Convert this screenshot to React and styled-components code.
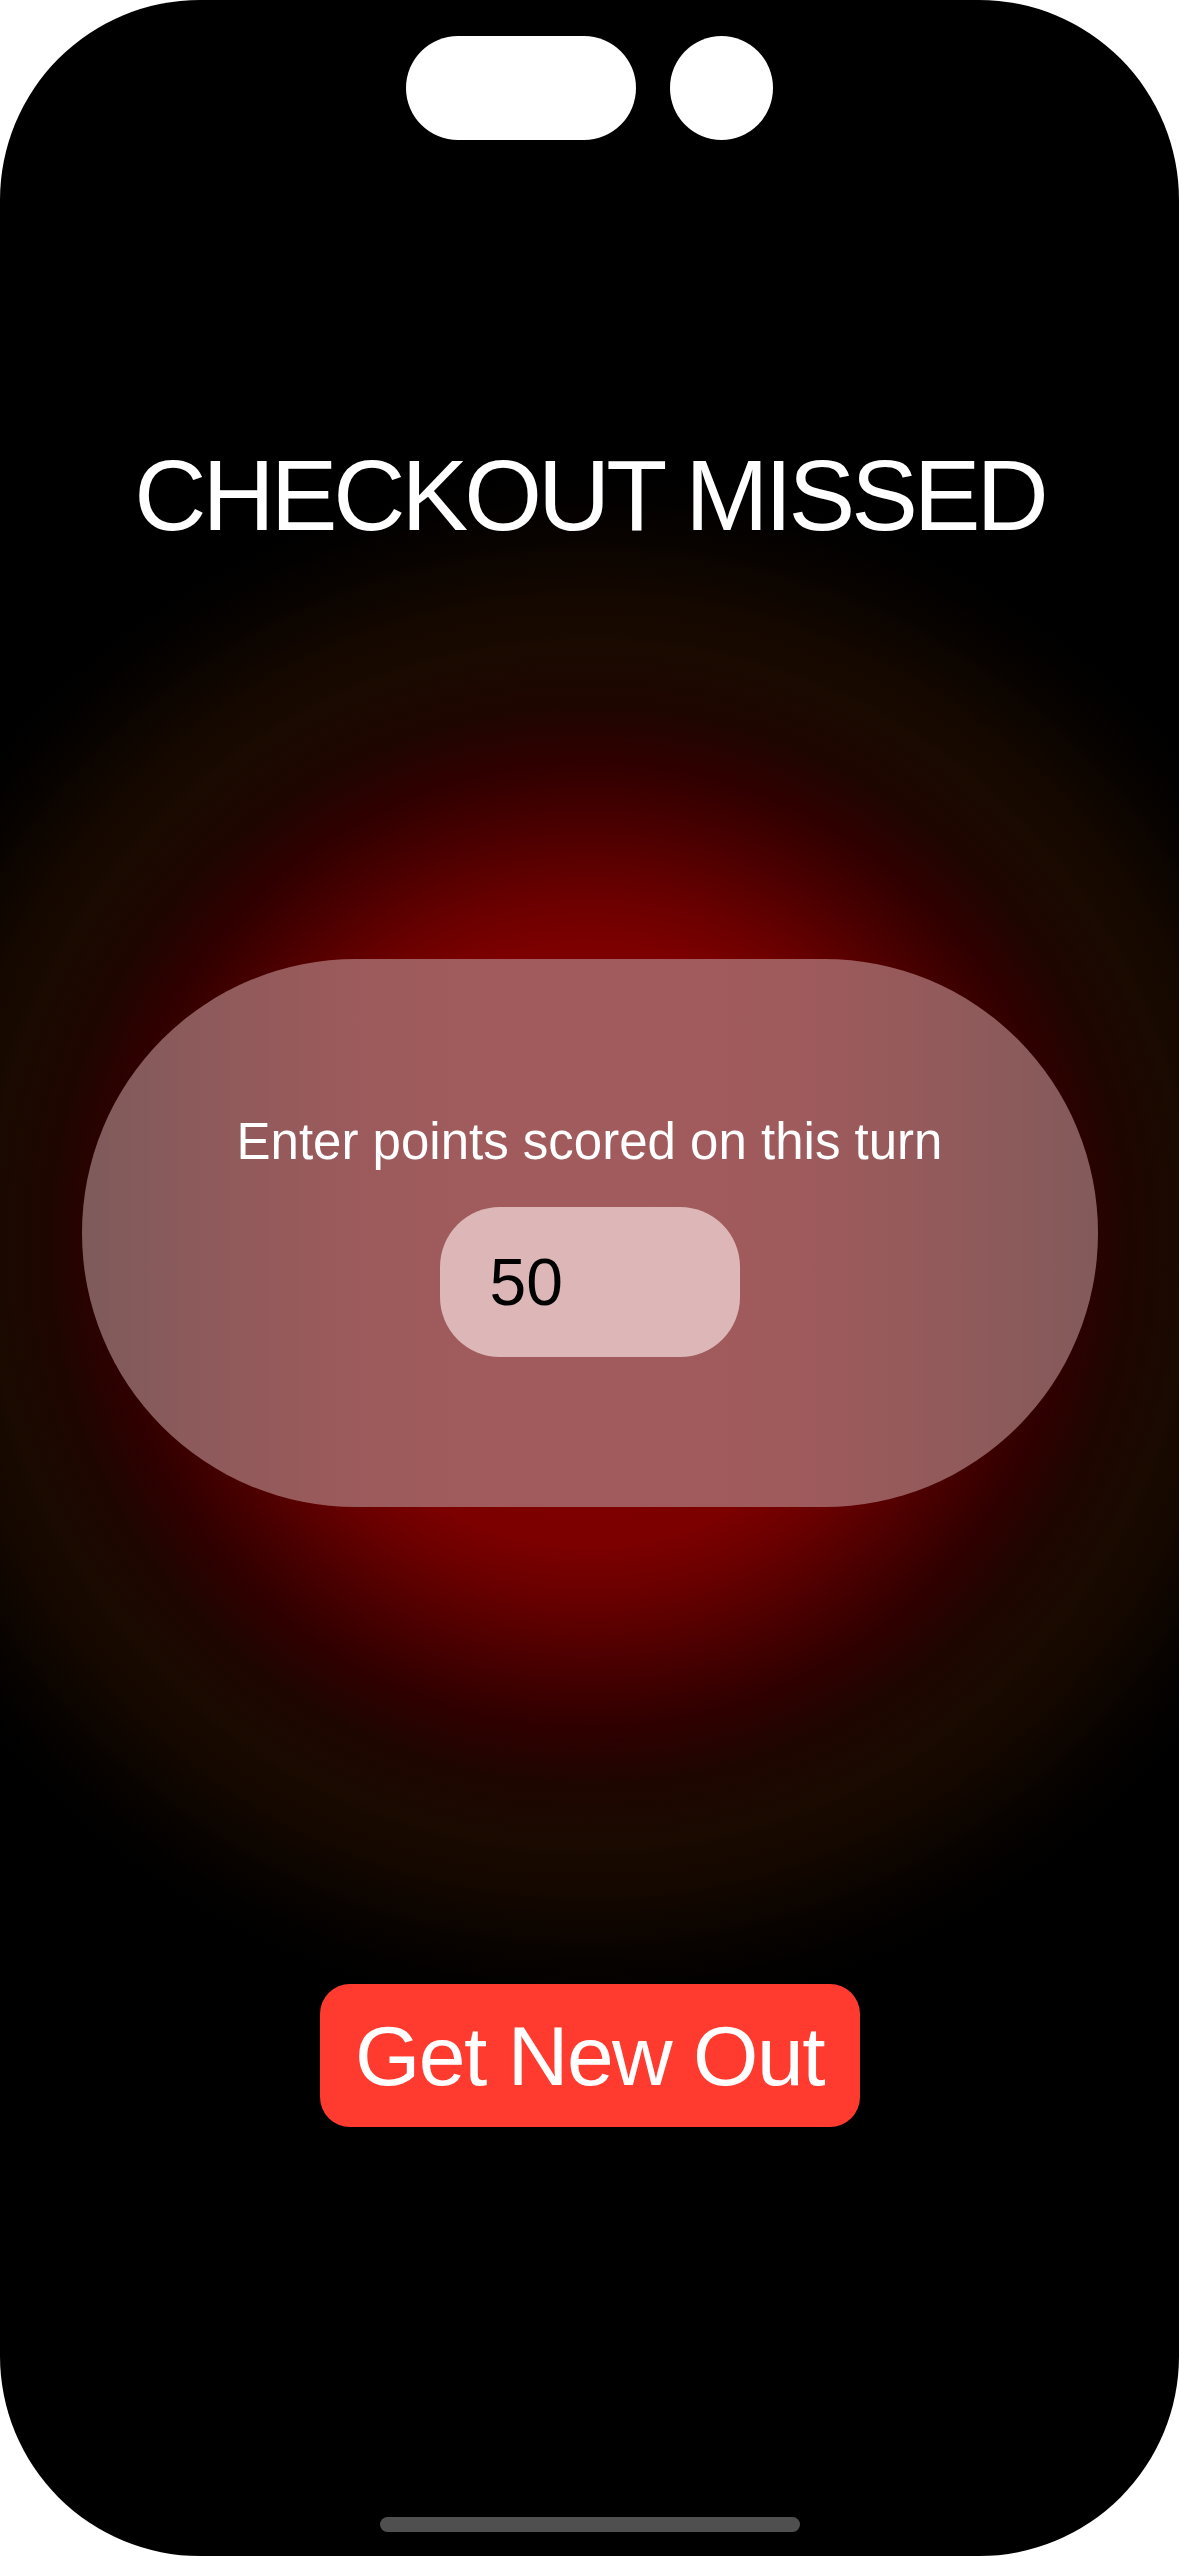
import React from 'react';
import styled, { createGlobalStyle } from 'styled-components';

const GlobalStyle = createGlobalStyle`
  html, body {
    margin: 0;
    padding: 0;
    background: #ffffff;
  }
  * {
    box-sizing: border-box;
  }
`;

const Phone = styled.div`
  position: relative;
  width: 1179px;
  height: 2556px;
  border-radius: 200px;
  overflow: hidden;
  display: flex;
  flex-direction: column;
  align-items: center;
  font-family: "Liberation Sans", Arial, sans-serif;
  background: radial-gradient(
    circle 770px at 589px 1245px,
    #900000 0px,
    #7c0000 300px,
    #6a0000 350px,
    #4a0000 420px,
    #300000 480px,
    #1e0600 540px,
    #1a0a00 600px,
    #120700 660px,
    #060200 720px,
    #000000 770px
  );
  background-color: #000;
`;

const IslandRow = styled.div`
  display: flex;
  gap: 34px;
  padding-top: 36px;
`;

const Pill = styled.div`
  width: 230px;
  height: 104px;
  border-radius: 52px;
  background: #ffffff;
`;

const Lens = styled.div`
  width: 103px;
  height: 104px;
  border-radius: 50%;
  background: #ffffff;
`;

const Title = styled.h1`
  margin: 305px 0 0;
  font-size: 100px;
  font-weight: 400;
  line-height: 1;
  letter-spacing: -4px;
  color: #ffffff;
`;

const Card = styled.div`
  margin-top: 414px;
  width: 1016px;
  height: 548px;
  border-radius: 274px;
  padding-top: 157px;
  display: flex;
  flex-direction: column;
  align-items: center;
  gap: 40px;
  background: linear-gradient(
    90deg,
    #7e5b5b 0%,
    #8e5a5b 12%,
    #9a5a5b 24%,
    #a15b5d 40%,
    #a25b5d 55%,
    #9f5a5c 70%,
    #955a5b 82%,
    #835a5a 100%
  );
`;

const Prompt = styled.div`
  font-size: 51px;
  line-height: 1;
  color: #ffffff;
`;

const PointsField = styled.input`
  width: 300px;
  height: 150px;
  border: none;
  outline: none;
  border-radius: 60px;
  padding: 0 0 0 50px;
  background: #ddb7b8;
  color: #000000;
  font-family: "Liberation Sans", Arial, sans-serif;
  font-size: 66px;
`;

const NewOutButton = styled.button`
  margin-top: 477px;
  width: 540px;
  height: 143px;
  border: none;
  border-radius: 30px;
  padding: 0;
  background: #ff3b30;
  color: #ffffff;
  font-family: "Liberation Sans", Arial, sans-serif;
  font-size: 84px;
  line-height: 1;
  letter-spacing: -1.5px;
  cursor: pointer;
`;

const HomeIndicator = styled.div`
  margin-top: 390px;
  width: 420px;
  height: 15px;
  border-radius: 8px;
  background: #4f4f4f;
`;

export default function App() {
  return (
    <>
      <GlobalStyle />
      <Phone>
        <IslandRow>
          <Pill />
          <Lens />
        </IslandRow>
        <Title>CHECKOUT MISSED</Title>
        <Card>
          <Prompt>Enter points scored on this turn</Prompt>
          <PointsField type="text" defaultValue="50" readOnly />
        </Card>
        <NewOutButton>Get New Out</NewOutButton>
        <HomeIndicator />
      </Phone>
    </>
  );
}
